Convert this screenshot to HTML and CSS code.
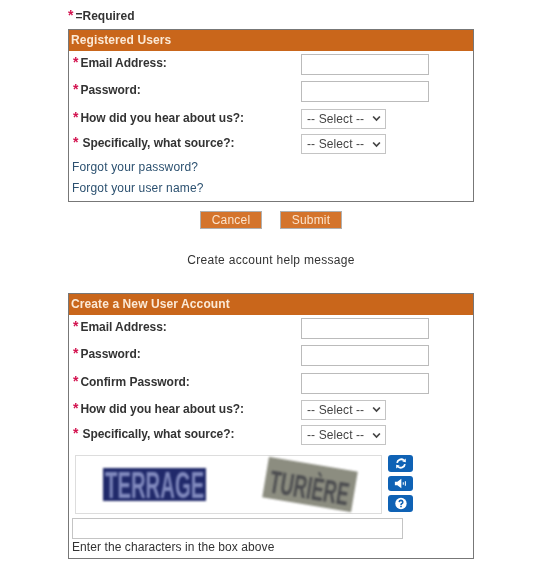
FILE: index.html
```html
<!DOCTYPE html>
<html lang="en">
<head>
<meta charset="utf-8">
<title>Sign in</title>
<link rel="stylesheet" href="styles.css">
</head>
<body>
<main class="page">
  <p class="legend"><span class="star">*</span>=Required</p>
  <section class="panel">
    <h2 class="panel-head">Registered Users</h2>
    <div class="panel-body">
      <div class="row text-row"><label class="label"><span class="star">*</span>Email Address:</label><input class="field" type="text"></div>
      <div class="row text-row"><label class="label"><span class="star">*</span>Password:</label><input class="field" type="password"></div>
      <div class="row select-row"><label class="label"><span class="star">*</span>How did you hear about us?:</label><div class="select"><span>-- Select --</span><svg class="chev" viewBox="0 0 8 6"><path d="M1 1.2 4 4.4 7 1.2"/></svg></div></div>
      <div class="row select-row last-select"><label class="label"><span class="star wide">*</span>Specifically, what source?:</label><div class="select"><span>-- Select --</span><svg class="chev" viewBox="0 0 8 6"><path d="M1 1.2 4 4.4 7 1.2"/></svg></div></div>
      <a class="link" href="#">Forgot your password?</a>
      <a class="link" href="#">Forgot your user name?</a>
    </div>
  </section>
  <div class="actions">
    <button class="btn" type="button">Cancel</button>
    <button class="btn" type="button">Submit</button>
  </div>
  <p class="help">Create account help message</p>
  <section class="panel">
    <h2 class="panel-head">Create a New User Account</h2>
    <div class="panel-body">
      <div class="row text-row"><label class="label"><span class="star">*</span>Email Address:</label><input class="field" type="text"></div>
      <div class="row text-row"><label class="label"><span class="star">*</span>Password:</label><input class="field" type="password"></div>
      <div class="row text-row"><label class="label"><span class="star">*</span>Confirm Password:</label><input class="field" type="password"></div>
      <div class="row select-row"><label class="label"><span class="star">*</span>How did you hear about us?:</label><div class="select"><span>-- Select --</span><svg class="chev" viewBox="0 0 8 6"><path d="M1 1.2 4 4.4 7 1.2"/></svg></div></div>
      <div class="row select-row"><label class="label"><span class="star wide">*</span>Specifically, what source?:</label><div class="select"><span>-- Select --</span><svg class="chev" viewBox="0 0 8 6"><path d="M1 1.2 4 4.4 7 1.2"/></svg></div></div>
      <div class="captcha">
        <div class="captcha-box">
          <svg class="word-blue" viewBox="0 0 103 33"><rect width="103" height="33"/><text transform="translate(2 30) scale(1 1.8)">TERRAGE</text></svg>
          <svg class="word-grey" viewBox="0 0 90 41"><rect width="90" height="41"/><text transform="translate(5 35) scale(1 1.75)">TURIÈRE</text></svg>
        </div>
        <div class="captcha-tools">
          <button class="tool tall" type="button" aria-label="Reload"><svg viewBox="0 0 16 16"><path d="M3.2 7.2A5 5 0 0 1 11.6 4.2"/><path class="fill" d="M9.6 5.6 14 6.4 13.8 1.8z"/><path d="M12.8 8.8A5 5 0 0 1 4.4 11.8"/><path class="fill" d="M6.4 10.4 2 9.6 2.2 14.2z"/></svg></button>
          <button class="tool short" type="button" aria-label="Audio"><svg viewBox="0 0 16 12"><path class="fill" d="M1 4H3.8L8.4 .5V11.5L3.8 8H1z"/><path class="thin" d="M10.6 4.5V7.5M13 3.5V8.5"/></svg></button>
          <button class="tool tall" type="button" aria-label="Help"><svg viewBox="0 0 16 16"><circle class="fill" cx="8" cy="8" r="7"/><path class="mark" d="M5.8 6.3A2.2 2.2 0 1 1 8.8 8.4C8.1 8.8 8 9.1 8 10M8 11V12.6"/></svg></button>
        </div>
      </div>
      <input class="answer" type="text">
      <p class="hint">Enter the characters in the box above</p>
    </div>
  </section>
</main>
</body>
</html>
```
FILE: styles.css
```css
* { box-sizing: border-box; }
html, body { margin: 0; background: #fff; }
body {
  font-family: "Liberation Sans", Arial, sans-serif;
  font-size: 12px;
  color: #333;
  height: 566px;
  overflow: hidden;
}
.page { width: 550px; padding: 0 76px 0 68px; filter: blur(0.35px); }
.legend { margin: 0; height: 29px; padding-top: 9px; line-height: 14px; font-weight: bold; }
.star { color: #d3134f; font-weight: bold; font-size: 14px; line-height: 12px; margin-right: 2px; }
.star.wide { margin-right: 4px; }
.panel { border: 1px solid #777; width: 406px; }
.panel-head {
  margin: 0;
  height: 21px;
  background: #c9661b;
  color: #fbe9d6;
  font-size: 12px;
  font-weight: bold;
  line-height: 21px;
  padding-left: 2px;
  letter-spacing: .1px;
}
.panel-body { padding: 3px 0 0 3px; }
.row { display: grid; grid-template-columns: 229px auto; justify-content: start; align-items: start; font-weight: bold; }
.text-row { height: 27.4px; }
.select-row { height: 25.5px; }
.last-select { height: 24.5px; }
.label { line-height: 16px; padding: 1px 0 0 1px; letter-spacing: -.04px; }
.field { width: 128px; height: 21px; border: 1px solid #bbb; background: #fff; padding: 0; display: block; }
.select {
  width: 85px; height: 20px; border: 1px solid #c4c4c4; background: #fff;
  display: flex; align-items: center; justify-content: space-between;
  font-weight: normal; padding: 0 4px 0 5px; letter-spacing: .1px; color: #444;
}
.chev { width: 9px; height: 7px; fill: none; stroke: #444; stroke-width: 1.5; }
.link { display: block; color: #2c5170; text-decoration: none; line-height: 16px; height: 21px; letter-spacing: .16px; }
.actions { display: flex; justify-content: center; gap: 18px; margin: 9px 0 0; width: 406px; }
.btn {
  width: 62px; height: 18px; padding: 0; border: 1px solid #b0b0b0;
  background: #d4742c; color: #fbe3cc; font: 12px "Liberation Sans", Arial, sans-serif; letter-spacing: .2px;
}
.help { margin: 24px 0 0; width: 406px; text-align: center; line-height: 14px; letter-spacing: .3px; height: 40px; }
.captcha { display: flex; gap: 6px; margin-top: 4px; padding-left: 3px; }
.captcha-box {
  width: 307px; height: 59px; border: 1px solid #ddd; background: #fff;
  display: flex; align-items: center; padding-left: 27px; gap: 59px;
}
.word-blue { width: 103px; height: 33px; flex: none; overflow: visible; filter: blur(1px); }
.word-blue rect { fill: #20296a; }
.word-blue text { font: bold 20.3px "Liberation Sans", sans-serif; fill: #8089bd; }
.word-grey { width: 90px; height: 41px; flex: none; overflow: visible; transform: rotate(9.5deg); filter: blur(1.1px); }
.word-grey rect { fill: #8c8d80; }
.word-grey text { font: bold 18.2px "Liberation Sans", sans-serif; fill: #4a4b4e; }
.captcha-tools { display: flex; flex-direction: column; gap: 4px; }
.tool {
  width: 25px; padding: 0; border: 0; border-radius: 3px; background: #0f62b5;
  display: flex; align-items: center; justify-content: center;
}
.tool.tall { height: 17px; }
.tool.short { height: 15px; }
.tool svg { width: 14px; height: 13px; fill: none; stroke: #fff; stroke-width: 2.2; }
.tool .fill { fill: #fff; stroke: none; }
.tool .thin { stroke-width: 1.2; }
.tool .mark { stroke: #0f62b5; stroke-width: 2; }
.answer { display: block; width: 331px; height: 21px; border: 1px solid #c4c4c4; background: #fff; margin-top: 4px; padding: 0; }
.hint { margin: 0; line-height: 16px; letter-spacing: .08px; height: 19px; }
```
